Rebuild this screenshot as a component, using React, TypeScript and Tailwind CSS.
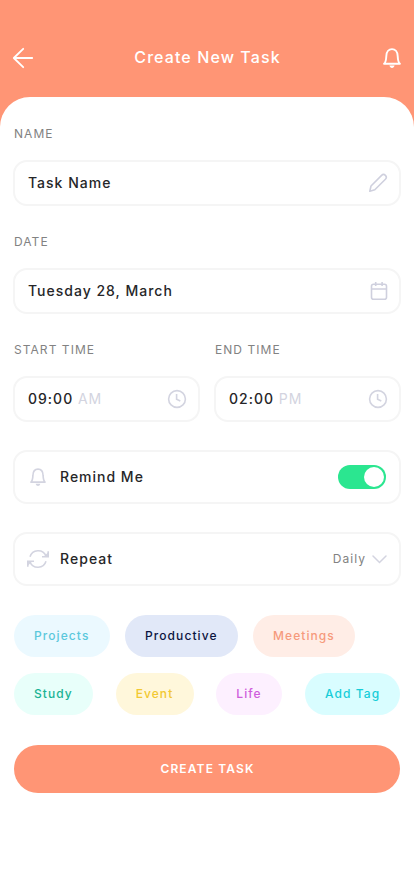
import React, { useState } from 'react';

const PencilIcon = () => (
  <svg width="20" height="20" viewBox="0 0 20 20" fill="none" stroke="#cfd0de" strokeWidth="1.6" strokeLinejoin="round" strokeLinecap="round">
    <path d="M1.8 18.2L3 13L13.6 2.4A2.6 2.6 0 0 1 17.4 6.2L6.8 16.8Z" />
  </svg>
);

const CalendarIcon = () => (
  <svg width="18" height="20" viewBox="0 0 18 20" fill="none" stroke="#cfd0de" strokeWidth="1.6">
    <rect x="1.5" y="3.2" width="15" height="15" rx="2" />
    <path d="M1.5 8H16.5M5.7 1V5M12.1 1V5" />
  </svg>
);

const ClockIcon = () => (
  <svg width="20" height="20" viewBox="0 0 20 20" fill="none" stroke="#d3d4e0" strokeWidth="1.6">
    <circle cx="10" cy="10" r="8.4" />
    <path d="M9.6 4.9V10.3L13.3 12" />
  </svg>
);

const BellIcon = ({ className, strokeWidth }: any) => (
  <svg className={className} viewBox="0 0 18 20" fill="none" stroke="currentColor" strokeWidth={strokeWidth}>
    <path d="M1.1 15.8H16.9C15.1 14.2 14.9 12.8 14.7 8.2C14.6 3.5 12 1.1 9 1.1C6 1.1 3.4 3.5 3.3 8.2C3.1 12.8 2.9 14.2 1.1 15.8Z" strokeLinejoin="round" />
    <path d="M6.4 17.5H11.6C11.2 19.1 10.2 20 9 20C7.8 20 6.8 19.1 6.4 17.5Z" fill="currentColor" stroke="none" />
  </svg>
);

const RepeatIcon = () => (
  <svg width="22" height="20" viewBox="0 0 22 20" fill="none" stroke="#d3d4e0" strokeWidth="1.6">
    <path d="M3 7.8A8.5 8.5 0 0 1 19 7" />
    <path d="M19 12.2A8.5 8.5 0 0 1 3 13" />
    <path d="M21.2 2.2V7.7H15M.8 17.8V12.3H7" />
    <path d="M21.2 3.2V7.7H16.6ZM.8 16.8V12.3H5.4Z" fill="#d3d4e0" stroke="none" />
  </svg>
);

const Label = ({ children }: any) => (
  <div className="h-4 pl-px text-[12px] leading-4 tracking-[1.05px] text-[#828282]">{children}</div>
);

const Field = ({ children }: any) => (
  <div className="mt-[18px] flex h-[46px] items-center justify-between rounded-[14px] border-2 border-[#f5f5f5] pl-[13px] pr-[11px] text-[14px] font-medium tracking-[1px] text-[#262628]">
    {children}
  </div>
);

const firstRow = [
  { name: 'Projects', style: 'w-24 bg-[#ebf9ff] text-[#5bc8dc]' },
  { name: 'Productive', style: 'w-[113px] bg-[#e1e8f8] text-[#0b1440]' },
  { name: 'Meetings', style: 'w-[102px] bg-[#ffede6] text-[#f69a7c]' },
];

const secondRow = [
  { name: 'Study', style: 'w-[79px] bg-[#e8fffa] text-[#1ab394]' },
  { name: 'Event', style: 'w-[78px] bg-[#fff7db] text-[#f2c832]' },
  { name: 'Life', style: 'w-[66px] bg-[#fdf0ff] text-[#cf5cdc]' },
  { name: 'Add Tag', style: 'w-[95px] bg-[#d9fdff] text-[#16cdd8]' },
];

const Tag = ({ name, style }: any) => (
  <button className={`h-[42px] rounded-full pl-5 text-left text-[12px] font-medium tracking-[1.08px] whitespace-nowrap ${style}`}>
    {name}
  </button>
);

const App: React.FC = () => {
  const [remind, setRemind] = useState(true);

  return (
    <div className="flex h-[896px] w-[414px] flex-col overflow-hidden bg-[#ff9575] font-['Inter','Liberation_Sans',sans-serif]">
      {/* Header */}
      <header className="flex h-[97px] shrink-0 items-center justify-between pl-3 pr-[13px] pt-[19px]">
        <svg width="22" height="22" viewBox="0 0 22 22" fill="none" stroke="#fff" strokeWidth="1.8" strokeLinecap="round" strokeLinejoin="round">
          <path d="M11.2 1.8L1.8 11L11.2 20.2M2 11H20.2" />
        </svg>
        <h1 className="mr-[2px] pb-[2px] text-[16px] font-medium tracking-[1.1px] text-white">Create New Task</h1>
        <BellIcon className="h-5 w-[18px] text-white" strokeWidth={1.9} />
      </header>

      <main className="flex-1 rounded-t-[30px] bg-white px-[13px] pt-[29px]">
        <Label>NAME</Label>
        <Field>
          <span className="pb-[2px]">Task Name</span>
          <PencilIcon />
        </Field>

        <div className="mt-7">
          <Label>DATE</Label>
          <Field>
            <span className="pb-[2px]">Tuesday 28, March</span>
            <CalendarIcon />
          </Field>
        </div>

        {/* Start and end time */}
        <div className="mt-7 grid grid-cols-2 gap-[14px]">
          <div>
            <Label>START TIME</Label>
            <Field>
              <span className="pb-[2px]">09:00 <span className="font-normal text-[#d3d4e0]">AM</span></span>
              <ClockIcon />
            </Field>
          </div>
          <div>
            <Label>END TIME</Label>
            <Field>
              <span className="pb-[2px]">02:00 <span className="font-normal text-[#d3d4e0]">PM</span></span>
              <ClockIcon />
            </Field>
          </div>
        </div>

        {/* Options */}
        <div className="mt-7 flex h-[54px] items-center rounded-[14px] border-2 border-[#f5f5f5] pl-[15px] pr-[13px]">
          <BellIcon className="h-[18px] w-4 text-[#d3d4e0]" strokeWidth={1.8} />
          <span className="ml-[14px] pb-[2px] text-[14px] font-medium tracking-[1px] text-[#262628]">Remind Me</span>
          <button
            onClick={() => setRemind(!remind)}
            className={`ml-auto flex h-6 w-12 items-center rounded-full px-[2px] ${remind ? 'justify-end bg-[#2be690]' : 'justify-start bg-[#d3d4e0]'}`}
          >
            <span className="size-5 rounded-full bg-white" />
          </button>
        </div>
        <div className="mt-7 flex h-[54px] items-center rounded-[14px] border-2 border-[#f5f5f5] pl-3 pr-3">
          <RepeatIcon />
          <span className="ml-[11px] pb-[2px] text-[14px] font-medium tracking-[1.05px] text-[#262628]">Repeat</span>
          <span className="ml-auto text-[12px] tracking-[1.05px] text-[#828282]">Daily</span>
          <svg className="ml-[6px]" width="15" height="9" viewBox="0 0 15 9" fill="none" stroke="#d3d4e0" strokeWidth="1.5" strokeLinecap="round">
            <path d="M1 1L7.5 7.5L14 1" />
          </svg>
        </div>

        {/* Tags */}
        <div className="mt-[29px] flex gap-[15px] px-px">
          {firstRow.map((tag) => (
            <Tag key={tag.name} {...tag} />
          ))}
        </div>
        <div className="mt-4 flex justify-between px-px">
          {secondRow.map((tag) => (
            <Tag key={tag.name} {...tag} />
          ))}
        </div>

        <div className="mt-[30px] px-px">
          <button className="h-12 w-full rounded-full bg-[#ff9575] pl-px text-[12px] font-semibold tracking-[1.15px] text-white">
            CREATE TASK
          </button>
        </div>
      </main>
    </div>
  );
};

export default App;
